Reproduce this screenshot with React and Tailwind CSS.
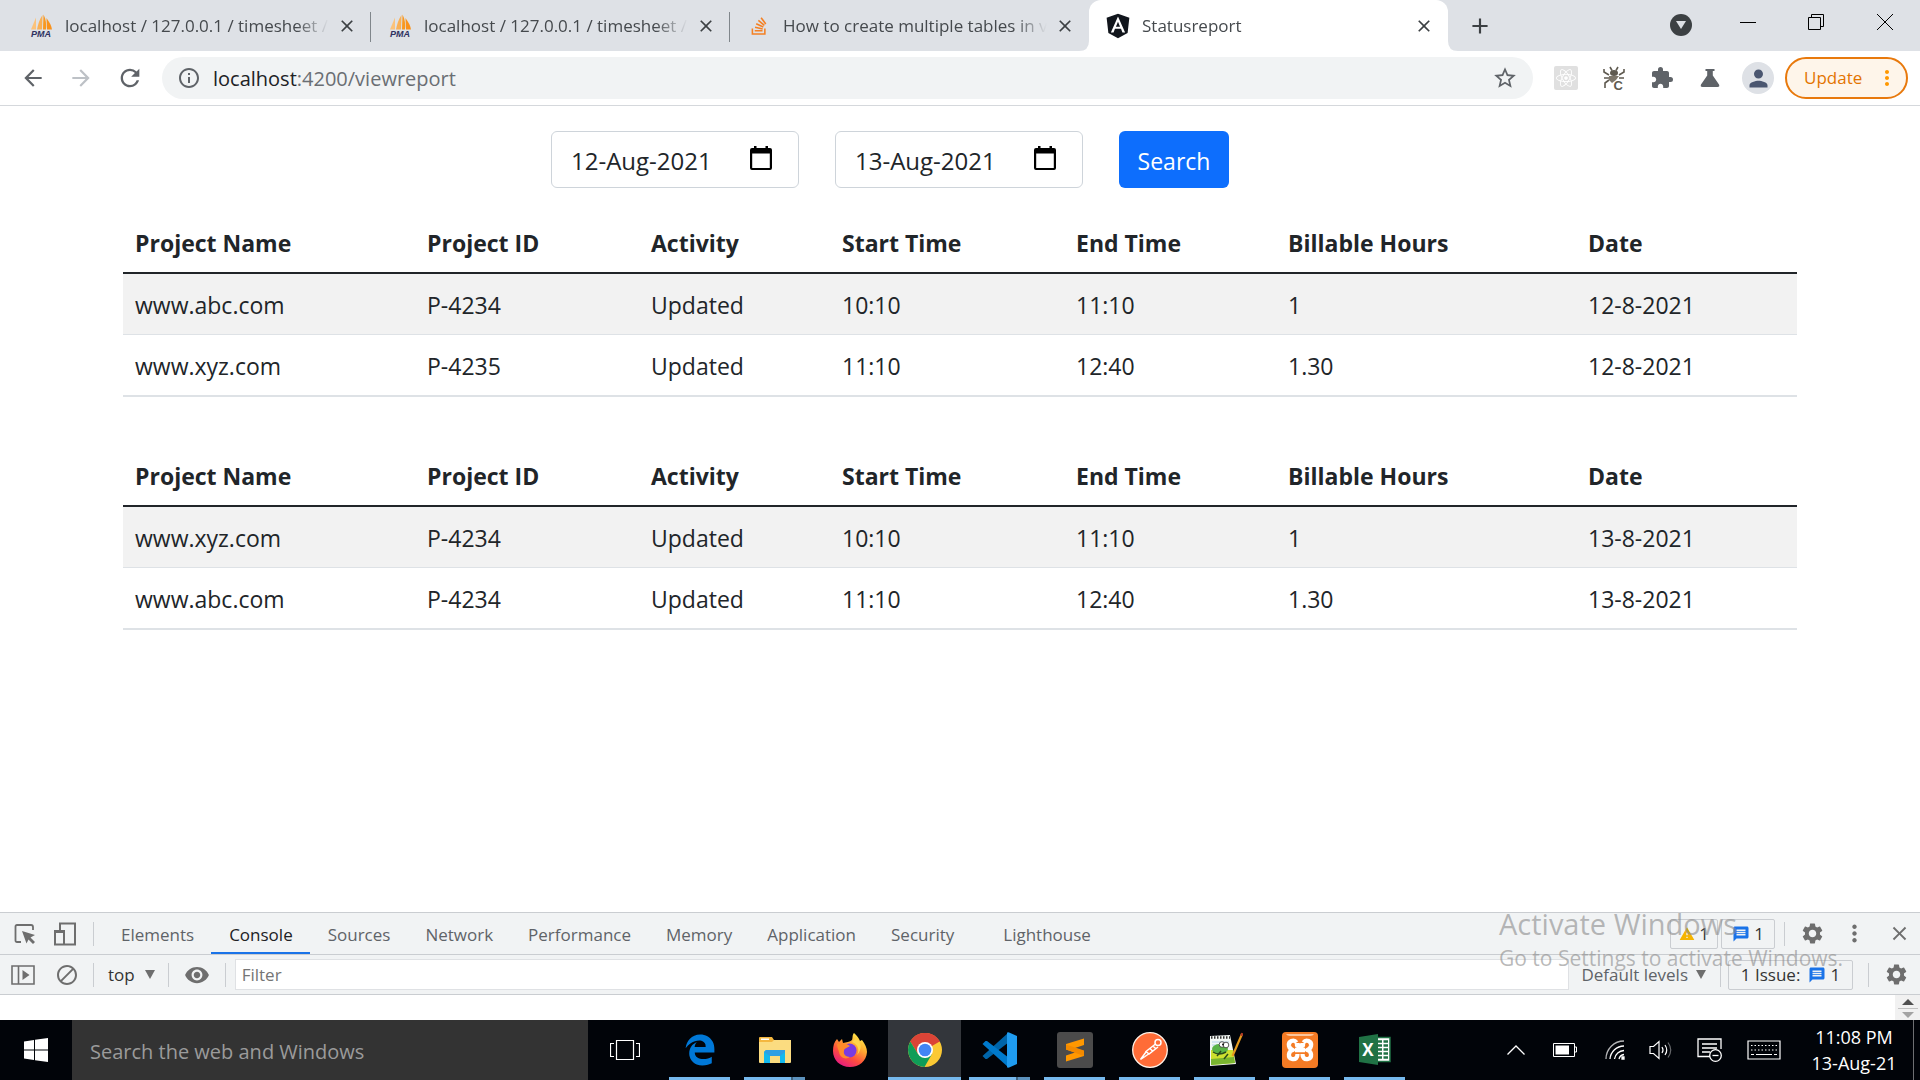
import React, { useState } from 'react';
import {
  MdArrowBack, MdArrowForward, MdRefresh, MdInfoOutline, MdStarBorder,
  MdExtension, MdPerson, MdMoreVert, MdClose, MdSettings, MdBlock,
  MdVisibility, MdWarning, MdMessage, MdAdd
} from 'react-icons/md';
import { FaAngular, FaReact, FaStackOverflow, FaEdgeLegacy } from 'react-icons/fa';

const reports = [
  {
    id: 1,
    rows: [
      ['www.abc.com', 'P-4234', 'Updated', '10:10', '11:10', '1', '12-8-2021'],
      ['www.xyz.com', 'P-4235', 'Updated', '11:10', '12:40', '1.30', '12-8-2021'],
    ],
  },
  {
    id: 2,
    rows: [
      ['www.xyz.com', 'P-4234', 'Updated', '10:10', '11:10', '1', '13-8-2021'],
      ['www.abc.com', 'P-4234', 'Updated', '11:10', '12:40', '1.30', '13-8-2021'],
    ],
  },
];

const columns = [
  { label: 'Project Name', width: 'w-[292px]' },
  { label: 'Project ID', width: 'w-[224px]' },
  { label: 'Activity', width: 'w-[191px]' },
  { label: 'Start Time', width: 'w-[234px]' },
  { label: 'End Time', width: 'w-[212px]' },
  { label: 'Billable Hours', width: 'w-[300px]' },
  { label: 'Date', width: 'w-[221px]' },
];

/* ---------- Icons ---------- */

const PmaIcon = () => (
  <svg viewBox="0 0 24 24" className="w-6 h-6">
    <path d="M7 3.5 L2 15.5 H7 Z" fill="#fbc27a" />
    <path d="M13.5 1 C10 6 9 11 8 15.5 H13 Z" fill="#f9b056" />
    <path d="M14.5 0.5 C17 5 17.5 11 17 15.5 H14 Z" fill="#f89820" />
    <path d="M17.500 4 C21 9 22.500 12 23 15.500 H18 Z" fill="#f9921c" />
    <text x="12" y="23" textAnchor="middle" fontSize="9" fontWeight="bold" fontStyle="italic" fontFamily="Liberation Sans, sans-serif" fill="#2f3160">PMA</text>
  </svg>
);

const BugIcon = () => (
  <svg viewBox="0 0 24 24" className="w-6 h-6" fill="none" stroke="#5f5a50" strokeWidth="1.6">
    <path d="M8 1 L10 4.5 M16 1 L14 4.5 M7 9 L2 6 V3 M17 9 L22 6 V3 M7 12 H2 M17 12 H22 M7 14 L3 17 V22" />
    <ellipse cx="12" cy="7" rx="4" ry="3" fill="#5f5a50" stroke="none" />
    <path d="M7 10 H17 L14 14 L10 17 L7 14 Z" fill="#7d766a" stroke="none" />
    <text x="11.500" y="24" fontSize="13" fontWeight="bold" fontFamily="Liberation Sans, sans-serif" fill="#5f5a50" stroke="none">C</text>
  </svg>
);

const FlaskIcon = () => (
  <svg viewBox="0 0 24 24" className="w-6 h-6" fill="#5f6368">
    <path d="M7.5 3 H16.5 V5 H14.8 V9.5 L21 18.5 Q22 21 19.5 21 H4.5 Q2 21 3 18.5 L9.2 9.5 V5 H7.5 Z" />
  </svg>
);

const InspectIcon = () => (
  <svg viewBox="0 0 24 24" className="w-6 h-6">
    <path d="M8 20 H4 Q2.5 20 2.5 18.5 V4.500 Q2.500 3 4 3 H18 Q20 3 20 5 V8" fill="none" stroke="#6e6e6e" strokeWidth="1.8" />
    <path d="M9 9 L22 13 L17.500 15.500 L22 20 L20 22 L15.500 17.500 L13.500 21.500 Z" fill="#6e6e6e" />
  </svg>
);

const DeviceIcon = () => (
  <svg viewBox="0 0 24 24" className="w-6 h-6" fill="none" stroke="#6e6e6e" strokeWidth="2">
    <path d="M7 8 V1.500 H22 V22.500 H12" />
    <rect x="2" y="9" width="9" height="13.500" />
    <path d="M2 9.500 H11" strokeWidth="3" />
  </svg>
);

const SidebarIcon = () => (
  <svg viewBox="0 0 24 20" className="w-6 h-5">
    <path d="M1 1 H23 V19 H1 Z M7.500 1 V19" fill="none" stroke="#6e6e6e" strokeWidth="1.600" />
    <path d="M11.500 5 L18.500 10 L11.500 15 Z" fill="#6e6e6e" />
  </svg>
);

const CalendarIcon = () => (
  <svg viewBox="0 0 24 26" className="w-6 h-[26px]">
    <path d="M5 1 H7.500 V3 H16.500 V1 H19 V3 H21 Q23 3 23 5 V23 Q23 25 21 25 H3 Q1 25 1 23 V5 Q1 3 3 3 H5 Z M3.200 8.500 V23 H20.800 V8.500 Z" fill="#000" fillRule="evenodd" />
  </svg>
);

const ExplorerIcon = () => (
  <svg viewBox="0 0 36 36" className="w-9 h-9">
    <path d="M2 6 Q2 5 3 5 H15 L17 8 H33 V30 H2 Z" fill="#f4b73f" />
    <path d="M4 6.500 H12 V8 H4 Z" fill="#fff" />
    <path d="M2 10 H15 L17 8 H34 V30 Q34 31 33 31 H3 Q2 31 2 30 Z" fill="#fbdc80" />
    <path d="M9 18 H28 V31 H23 V24 H13 V31 H7 V20 Z" fill="#14b9ee" />
    <path d="M9 18 H28 V20 L23 24 H13 L7 20 Z" fill="#2f9fe4" />
  </svg>
);

const FirefoxIcon = () => (
  <svg viewBox="0 0 36 36" className="w-9 h-9">
    <defs>
      <linearGradient id="ffBody" x1="0.800" y1="0" x2="0.200" y2="1">
        <stop offset="0" stopColor="#fff44f" />
        <stop offset="0.350" stopColor="#ffa930" />
        <stop offset="0.650" stopColor="#ff4f3c" />
        <stop offset="1" stopColor="#e3148b" />
      </linearGradient>
    </defs>
    <path d="M22 1 C25 4 27 6 28 9 L30 8 C33 12 35 16 35 20 C34.500 29 27 35 18 35 C8 35 1 28 1 19 C1 14 2 10 5 7 L7 10 L10 7 L11 11 C14 10 18 10 20 8 C21 6 20 3 22 1 Z" fill="url(#ffBody)" />
    <circle cx="17.500" cy="18.500" r="7" fill="#7a3be0" />
    <path d="M5 12 C9 10 14 11 18 14 C15 16 12 16 12 19 C11 22 14 25 18 25 C14 28 8 26 7 20 C6 17 5 14 5 12 Z" fill="#ff8a2a" />
    <path d="M20 10 C26 12 28 18 25 23 C30 18 30 10 24 6 Z" fill="#ffd64a" />
  </svg>
);

const ChromeIcon = () => (
  <svg viewBox="0 0 36 36" className="w-9 h-9">
    <circle cx="18" cy="18" r="17" fill="#fbc934" />
    <path d="M18 18 L3.300 9.500 A17 17 0 0 1 32.700 9.500 Z" fill="#db4437" />
    <path d="M18 10 H33 L32.700 9.500 A17 17 0 0 0 3.300 9.500 L11 22 Z" fill="#db4437" />
    <path d="M3.300 9.500 A17 17 0 0 0 17.500 35 L25 22 L18 26 L11 22 Z" fill="#0f9d58" />
    <circle cx="18" cy="18" r="8" fill="#fff" />
    <circle cx="18" cy="18" r="6.300" fill="#4285f4" />
  </svg>
);

const VsCodeIcon = () => (
  <svg viewBox="0 0 36 36" className="w-9 h-9">
    <path d="M26 1 L0.500 24 L3.500 27 L5 27 L27 10 Z" fill="#0065a9" />
    <path d="M26 35 L0.500 12 L3.500 9 L5 9 L27 26 Z" fill="#007acc" />
    <path d="M26 0 L35 4 V32 L26 36 Q27 35.500 27 34 V2 Q27 0.500 26 0 Z" fill="#1f9cf0" />
    <path d="M25 0.500 L27 0.500 V35.500 L25 35.500 Z" fill="#1f9cf0" />
  </svg>
);

const SublimeIcon = () => (
  <svg viewBox="0 0 36 36" className="w-9 h-9">
    <rect width="36" height="36" rx="3" fill="#4b4b4b" />
    <path d="M9 12 L27 6.500 V13 L18 16 L27 19 V24 L9 29.500 V23.500 L18 20.500 L9 17.500 Z" fill="#ff9800" />
    <path d="M9 17.500 V12.500 L27 18.500 V24 Z" fill="#f38a00" />
  </svg>
);

const PostmanIcon = () => (
  <svg viewBox="0 0 36 36" className="w-9 h-9">
    <circle cx="18" cy="18" r="17.300" fill="#ff6c37" stroke="#fff1e6" strokeWidth="1.300" />
    <circle cx="26" cy="10.500" r="3" fill="none" stroke="#fff" strokeWidth="1.500" />
    <path d="M23.500 12 L14 19.500 L17 22 L26 15 M21 14 L24 17 M18 16.500 L21 19.500 M14 20 L8.500 27.500 L13 24.500 L16.500 22" fill="none" stroke="#fff" strokeWidth="1.500" />
  </svg>
);

const NotepadIcon = () => (
  <svg viewBox="0 0 36 36" className="w-9 h-9">
    <path d="M3 4 L23 3 L29 32 L3 34 Z" fill="#f2f7f4" />
    <path d="M4 5.500 H23" stroke="#333" strokeWidth="2.500" strokeDasharray="1.500 1.500" />
    <path d="M5 10 H22 M5 13 H22" stroke="#b6d3ea" strokeWidth="1" />
    <path d="M4 18 L26 18 L28 31 L4 33 Z" fill="#cde02f" />
    <path d="M4 27 L27 25 L28 31 L4 33 Z" fill="#79b530" />
    <ellipse cx="13" cy="17" rx="8" ry="5" fill="#5ab347" />
    <path d="M6 20 Q12 24 19 20 M10 24 L14 19 M17 27 L21 22" fill="none" stroke="#2b4a1c" strokeWidth="1.500" />
    <circle cx="15" cy="12.500" r="2.800" fill="#fff" stroke="#333" strokeWidth="0.800" />
    <circle cx="19" cy="13" r="2.800" fill="#fff" stroke="#333" strokeWidth="0.800" />
    <circle cx="16" cy="12.500" r="1" fill="#111" />
    <path d="M35 2 L25.500 24" stroke="#e69a1d" strokeWidth="2.200" />
    <path d="M35.300 1 L34.300 4" stroke="#b13c26" strokeWidth="2.200" />
  </svg>
);

const XamppIcon = () => (
  <svg viewBox="0 0 36 36" className="w-9 h-9">
    <rect width="36" height="36" rx="4" fill="#f47b24" />
    <path d="M4 2 H32 Q31 4 28 4 H8 Q5 4 4 2 Z" fill="#fbc59b" />
    <path d="M14.500 10.500 C12 7 6 9 7 14 C7.500 16 9 17.500 11 18 C6 19 5.500 26 10 27 C14 28 15.500 25 15.500 22 M21.500 10.500 C24 7 30 9 29 14 C28.500 16 27 17.500 25 18 C30 19 30.500 26 26 27 C22 28 20.500 25 20.500 22 M13 18 H23 M15 11 V13.500 H21 V11" fill="none" stroke="#fff" strokeWidth="4.300" strokeLinejoin="round" />
  </svg>
);

const ExcelIcon = () => (
  <svg viewBox="0 0 36 36" className="w-9 h-9">
    <rect x="18" y="5.500" width="15" height="24" fill="#fff" stroke="#207245" strokeWidth="1.500" />
    <path d="M20 9.500 H31 M20 13.500 H31 M20 17.500 H31 M20 21.500 H31 M20 25.500 H31" stroke="#207245" strokeWidth="2.500" strokeDasharray="5 1.500" />
    <path d="M2 5 L21 2 V33 L2 30 Z" fill="#207245" />
    <text x="11" y="24" textAnchor="middle" fontSize="17" fontWeight="bold" fontFamily="Open Sans, sans-serif" fill="#fff">X</text>
  </svg>
);

/* ---------- Browser ---------- */

const tabs = [
  { id: 1, title: 'localhost / 127.0.0.1 / timesheet /', icon: <PmaIcon />, divider: true },
  { id: 2, title: 'localhost / 127.0.0.1 / timesheet /', icon: <PmaIcon />, divider: true },
  { id: 3, title: 'How to create multiple tables in v', icon: <FaStackOverflow className="w-5 h-5 text-[#f48024]" /> },
  { id: 4, title: 'Statusreport', icon: <span className="flex w-6 h-6 items-center justify-center"><FaAngular className="w-7 h-7 shrink-0 text-[#11151c]" /></span>, active: true },
];

const Tab = ({ tab }) => (
  <div className={`relative flex h-full w-[359px] shrink-0 items-center pt-px pl-[17px] pr-3.5 ${
    tab.active ? 'bg-white rounded-t-xl' : ''
  }`}>
    <span className="flex w-6 shrink-0 justify-center">{tab.icon}</span>
    <span className="ml-3 flex-1 overflow-hidden whitespace-nowrap text-[17px] leading-6 text-[#45494d] [mask-image:linear-gradient(to_right,#000_85%,transparent_97%)]">
      {tab.title}
    </span>
    <button aria-label="Close tab" className="flex w-5 justify-center text-[#3c4043]">
      <MdClose className="w-5 h-5" />
    </button>
    {tab.divider && <span className="absolute right-0 top-3 h-[30px] w-px bg-[#80868b]" />}
    {tab.active && (
      <>
        <svg viewBox="0 0 10 10" className="absolute bottom-0 -left-2.5 w-2.5 h-2.5"><path d="M10 0 V10 H0 Q10 10 10 0" fill="#fff" /></svg>
        <svg viewBox="0 0 10 10" className="absolute bottom-0 -right-2.5 w-2.5 h-2.5"><path d="M0 0 V10 H10 Q0 10 0 0" fill="#fff" /></svg>
      </>
    )}
  </div>
);

const TabStrip = () => (
  <div className="flex h-[51px] shrink-0 bg-[#dee1e6] pl-3">
    {tabs.map((tab) => <Tab key={tab.id} tab={tab} />)}
    <button aria-label="New tab" className="ml-[19px] text-[#3c4043]">
      <MdAdd className="w-[26px] h-[26px]" />
    </button>
    <div className="ml-auto flex items-start">
      <span className="mt-3.5 mr-[22px] flex w-[22px] h-[22px] items-center justify-center rounded-full bg-[#3c4043]">
        <svg viewBox="0 0 10 8" className="w-2.5 h-2"><path d="M0 0 H10 L5 8 Z" fill="#dee1e6" /></svg>
      </span>
      <button aria-label="Minimize" className="flex h-[43px] w-[68px] items-center justify-center">
        <svg viewBox="0 0 16 16" className="w-4 h-4"><path d="M0 8.500 H16" stroke="#000" /></svg>
      </button>
      <button aria-label="Restore" className="flex h-[43px] w-[68px] items-center justify-center">
        <svg viewBox="0 0 16 16" className="w-4 h-4" fill="none" stroke="#000"><path d="M0.500 3.500 H12.500 V15.500 H0.500 Z M3.500 3.500 V0.500 H15.500 V12.500 H12.500" /></svg>
      </button>
      <button aria-label="Close" className="flex h-[43px] w-[70px] items-center justify-center">
        <svg viewBox="0 0 16 16" className="w-4 h-4"><path d="M0 0 L16 16 M16 0 L0 16" stroke="#000" /></svg>
      </button>
    </div>
  </div>
);

const Toolbar = () => (
  <div className="flex h-[55px] shrink-0 items-center border-b border-[#d5d8dc] bg-white pl-5 pr-3">
    <button aria-label="Back" className="w-12 text-[#5f6368]"><MdArrowBack className="w-[26px] h-[26px]" /></button>
    <button aria-label="Forward" className="w-12 text-[#bdc1c6]"><MdArrowForward className="w-[26px] h-[26px]" /></button>
    <button aria-label="Reload" className="w-[46px] text-[#5f6368]"><MdRefresh className="w-[28px] h-[28px]" /></button>
    <div className="flex h-[42px] flex-1 items-center rounded-full bg-[#f1f3f4] px-[15px]">
      <MdInfoOutline className="w-6 h-6 text-[#5f6368]" />
      <div className="ml-3 pt-px text-[20px] leading-7 text-[#6a6e73]">
        <span className="text-[#202124]">localhost</span>:4200/viewreport
      </div>
      <button aria-label="Bookmark" className="ml-auto text-[#5f6368]"><MdStarBorder className="w-[26px] h-[26px]" /></button>
    </div>
    <div className="ml-[21px] flex items-center gap-6">
      <span className="flex w-6 h-6 items-center justify-center rounded-xs bg-[#e0e0e0]"><FaReact className="w-5 h-5 text-white" /></span>
      <BugIcon />
      <MdExtension className="w-6 h-6 text-[#5f6368]" />
      <FlaskIcon />
    </div>
    <span className="ml-5 flex w-8 h-8 items-center justify-center rounded-full bg-[#dee1e6]">
      <MdPerson className="w-[27px] h-[27px] text-[#4a5670]" />
    </span>
    <button className="ml-[11px] flex h-[42px] w-[123px] items-center justify-between rounded-full border-2 border-[#e8790c] bg-[#fef5ea] pl-[17px] pr-[7px] text-[17px] text-[#e37400]">
      Update
      <MdMoreVert className="w-6 h-6 text-[#ff9800]" />
    </button>
  </div>
);

/* ---------- Page ---------- */

const DateField = ({ label, value, onChange }) => (
  <div className="relative">
    <input
      type="text"
      aria-label={label}
      value={value}
      onChange={(e) => onChange(e.target.value)}
      className="block h-[57px] w-[248px] rounded-md border border-[#ced4da] bg-white pl-[19px] pr-14 pt-0.5 text-[24px] text-[#212529]"
    />
    <button aria-label="Open calendar" className="absolute right-[26px] top-3.5"><CalendarIcon /></button>
  </div>
);

const ReportTable = ({ rows }) => (
  <table className="mb-12 w-full table-fixed text-left text-[23px] leading-9 text-[#212529]">
    <thead>
      <tr className="border-b-2 border-[#212529]">
        {columns.map((col) => (
          <th key={col.label} className={`${col.width} px-3 pt-[13px] pb-[11px] font-bold`}>{col.label}</th>
        ))}
      </tr>
    </thead>
    <tbody>
      {rows.map((row) => (
        <tr key={row[0]} className="border-b border-[#dee2e6] last:border-b-2 odd:bg-[#f2f2f2]">
          {row.map((cell, i) => (
            <td key={columns[i].label} className="px-3 pt-[13px] pb-[11px]">{cell}</td>
          ))}
        </tr>
      ))}
    </tbody>
  </table>
);

const ViewReport = () => {
  const [from, setFrom] = useState('12-Aug-2021');
  const [to, setTo] = useState('13-Aug-2021');

  return (
    <main className="min-h-0 flex-1 overflow-hidden bg-white px-[123px] pt-[25px]">
      <form className="mb-6 ml-[428px] flex gap-9" onSubmit={(e) => e.preventDefault()}>
        <DateField label="From date" value={from} onChange={setFrom} />
        <DateField label="To date" value={to} onChange={setTo} />
        <button type="submit" className="w-[110px] rounded-md bg-[#0d6efd] pt-1 text-[23px] text-white">Search</button>
      </form>
      {reports.map((report) => <ReportTable key={report.id} rows={report.rows} />)}
    </main>
  );
};

/* ---------- DevTools ---------- */

const panels = ['Elements', 'Console', 'Sources', 'Network', 'Performance', 'Memory', 'Application', 'Security', 'Lighthouse'];

const Divider = () => <span className="h-6 w-px shrink-0 bg-[#cacdd1]" />;

const DevTools = () => (
  <section className="shrink-0 text-[17px] leading-6 text-[#5f6368]">
    <div className="flex h-[43px] items-center border-y border-[#cacdd1] bg-[#f1f3f4] pl-[13px] pr-[9px]">
      <button aria-label="Inspect element"><InspectIcon /></button>
      <button aria-label="Toggle device toolbar" className="ml-4 mr-4"><DeviceIcon /></button>
      <Divider />
      <nav className="ml-[9px] flex self-stretch">
        {panels.map((panel) => (
          <button
            key={panel}
            className={`pl-[18px] pr-[17px] pt-1 last:ml-3.5 ${
              panel === 'Console' ? 'border-b-2 border-[#1a73e8] text-[#202124]' : 'border-b-2 border-transparent'
            }`}
          >
            {panel}
          </button>
        ))}
      </nav>
      <div className="ml-auto flex items-center text-[#333]">
        <button className="flex h-[30px] w-12 items-center justify-center gap-1 rounded-xs border border-[#cacdd1]">
          <MdWarning className="w-4 h-4 text-[#f5b400]" />1
        </button>
        <button className="ml-[3px] mr-[9px] flex h-[30px] w-[54px] items-center justify-center gap-1 rounded-xs border border-[#cacdd1]">
          <MdMessage className="w-[18px] h-[18px] text-[#1a73e8]" />1
        </button>
        <Divider />
        <button aria-label="Settings" className="ml-[15px] text-[#6e6e6e]"><MdSettings className="w-[25px] h-[25px]" /></button>
        <button aria-label="More options" className="ml-4 text-[#6e6e6e]"><MdMoreVert className="w-[27px] h-[27px]" /></button>
        <button aria-label="Close developer tools" className="ml-5 text-[#6e6e6e]"><MdClose className="w-[23px] h-[23px]" /></button>
      </div>
    </div>
    <div className="flex h-10 items-center border-b border-[#cacdd1] bg-[#f1f3f4] pl-[11px] pr-[11px]">
      <button aria-label="Show console sidebar"><SidebarIcon /></button>
      <button aria-label="Clear console" className="ml-5 mr-3.5"><MdBlock className="w-6 h-6 text-[#6e6e6e]" /></button>
      <Divider />
      <button className="ml-3.5 mr-[13px] flex items-center gap-2.5 text-[#333]">
        top
        <svg viewBox="0 0 10 9" className="w-2.5 h-[9px]"><path d="M0 0 H10 L5 9 Z" fill="#6e6e6e" /></svg>
      </button>
      <Divider />
      <button aria-label="Live expression" className="mx-[15px]"><MdVisibility className="w-[26px] h-[26px] text-[#6e6e6e]" /></button>
      <Divider />
      <input
        aria-label="Filter"
        placeholder="Filter"
        className="ml-[9px] h-[31px] min-w-0 flex-1 border border-[#dfe1e4] bg-white px-1.5 placeholder:text-[#757575]"
      />
      <button className="ml-3 mr-3.5 flex items-center gap-2">
        Default levels
        <svg viewBox="0 0 10 9" className="w-2.5 h-[9px]"><path d="M0 0 H10 L5 9 Z" fill="#6e6e6e" /></svg>
      </button>
      <Divider />
      <button className="ml-[7px] mr-[15px] flex h-[30px] w-[125px] items-center justify-center gap-1 rounded-xs border border-[#cacdd1] text-[#333]">
        1 Issue: <MdMessage className="ml-1 w-[18px] h-[18px] text-[#1a73e8]" />1
      </button>
      <Divider />
      <button aria-label="Console settings" className="ml-[15px] text-[#6e6e6e]"><MdSettings className="w-[25px] h-[25px]" /></button>
    </div>
    <div className="flex h-[25px] justify-end bg-white">
      <div className="flex w-[25px] flex-col items-center justify-between bg-[#f1f1f1] pt-1 pb-0.5">
        <svg viewBox="0 0 12 6" className="w-3 h-1.5"><path d="M0 6 L6 0 L12 6 Z" fill="#505050" /></svg>
        <span className="h-px w-5 bg-[#c1c1c1]" />
        <svg viewBox="0 0 12 6" className="w-3 h-1.5"><path d="M0 0 L6 6 L12 0 Z" fill="#a3a3a3" /></svg>
      </div>
    </div>
  </section>
);

/* ---------- Taskbar ---------- */

const apps = [
  { name: 'Edge', icon: <FaEdgeLegacy className="w-8 h-8 text-[#0078d7]" />, open: true },
  { name: 'File Explorer', icon: <ExplorerIcon />, open: true, stacked: true },
  { name: 'Firefox', icon: <FirefoxIcon /> },
  { name: 'Chrome', icon: <ChromeIcon />, open: true, focused: true },
  { name: 'Visual Studio Code', icon: <VsCodeIcon />, open: true, stacked: true },
  { name: 'Sublime Text', icon: <SublimeIcon />, open: true },
  { name: 'Postman', icon: <PostmanIcon />, open: true },
  { name: 'Notepad++', icon: <NotepadIcon />, open: true },
  { name: 'XAMPP', icon: <XamppIcon />, open: true },
  { name: 'Excel', icon: <ExcelIcon />, open: true },
];

const TaskbarApp = ({ app }) => (
  <button aria-label={app.name} className={`flex h-full w-[73px] flex-col items-center ${app.focused ? 'bg-[#33363b]' : ''}`}>
    <span className="flex flex-1 items-center pt-[3px]">{app.icon}</span>
    <span className={`flex h-[3px] ${app.focused ? 'w-full' : 'w-[61px]'} ${app.open ? 'bg-[#76b9ed]' : ''}`}>
      {app.stacked && <span className="ml-auto w-3.5 border-l-2 border-[#40647f] bg-[#5c92bd]" />}
    </span>
  </button>
);

const Taskbar = () => (
  <footer className="flex h-[60px] shrink-0 bg-[#010409] text-white">
    <button aria-label="Start" className="flex w-[72px] items-center justify-center">
      <svg viewBox="0 0 24 24" className="w-6 h-6" fill="#fff">
        <path d="M0 3.500 L10 2 V11.500 H0 Z M11 1.800 L24 0 V11.500 H11 Z M0 12.500 H10 V22 L0 20.500 Z M11 12.500 H24 V24 L11 22.200 Z" />
      </svg>
    </button>
    <input
      aria-label="Search the web and Windows"
      placeholder="Search the web and Windows"
      className="w-[516px] bg-[#333] px-[18px] pt-1 text-[20px] placeholder:text-[#9b9b9b]"
    />
    <button aria-label="Task view" className="flex w-[73px] items-center justify-center">
      <svg viewBox="0 0 30 20" className="w-[30px] h-5" fill="none" stroke="#fff" strokeWidth="1.200">
        <path d="M6.500 0.500 H23.500 V19.500 H6.500 Z M4 3.500 H0.500 V16.500 H4 M26 3.500 H29.500 V16.500 H26" />
      </svg>
    </button>
    <div className="ml-0.5 flex gap-0.5">
      {apps.map((app) => <TaskbarApp key={app.name} app={app} />)}
    </div>
    <div className="ml-auto flex items-center">
      <svg viewBox="0 0 18 10" className="w-[18px] h-2.5" fill="none" stroke="#fff" strokeWidth="1.300"><path d="M0.500 9.500 L9 1 L17.500 9.500" /></svg>
      <svg viewBox="0 0 24 14" className="ml-7 w-6 h-3.5"><path d="M0.500 0.500 H21.500 V13.500 H0.500 Z M22 4 H23.500 V9 H22" fill="none" stroke="#fff" /><path d="M2.500 2.500 H16 V11.500 H2.500 Z" fill="#fff" /></svg>
      <svg viewBox="0 0 20 20" className="ml-7 w-5 h-5" fill="none" stroke="#fff" strokeWidth="1.300">
        <path d="M1 19 A18 18 0 0 1 19 1" opacity="0.700" />
        <path d="M5 19 A14 14 0 0 1 19 6 M9.500 19 A10 10 0 0 1 19 10.500 M14 19 A6 6 0 0 1 19 14.500" />
        <path d="M17 17 H19 V19 H17 Z" fill="#fff" />
      </svg>
      <svg viewBox="0 0 24 20" className="ml-6 w-6 h-5" fill="none" stroke="#fff" strokeWidth="1.200">
        <path d="M1 6.500 H4.500 L10 1.500 V18.500 L4.500 13.500 H1 Z M13 7 Q15 10 13 13" />
        <path d="M16 5 Q19.500 10 16 15" />
        <path d="M19 2.500 Q24.500 10 19 17.500" opacity="0.400" />
      </svg>
      <svg viewBox="0 0 26 24" className="ml-6 w-[26px] h-6" fill="none" stroke="#fff" strokeWidth="1.300">
        <path d="M13 18.500 H1 V1 H24 V11 M5 6 H20 M5 10 H20 M5 14 H13" />
        <circle cx="18.500" cy="17.500" r="5.800" />
        <path d="M15.500 17.500 H21.500" />
      </svg>
      <svg viewBox="0 0 34 20" className="ml-6 w-[34px] h-5" fill="none" stroke="#fff" strokeWidth="1.200">
        <path d="M1 1 H33 V19 H1 Z M4 14.500 H7 M9 14.500 H25 M27 14.500 H30" />
        <path d="M4 5.500 H30 M4 10 H30" strokeDasharray="1.500 2" />
      </svg>
      <div className="ml-6 mr-2.5 w-[98px] text-center text-[18px] leading-[26px]">
        <div>11:08 PM</div>
        <div>13-Aug-21</div>
      </div>
      <span className="mr-1.5 h-[60px] w-px bg-[#6d6f72]" />
    </div>
  </footer>
);

const App = () => (
  <div className="relative flex h-screen flex-col overflow-hidden bg-white font-['Open_Sans',sans-serif]">
    <TabStrip />
    <Toolbar />
    <ViewReport />
    <DevTools />
    <Taskbar />
    <div className="pointer-events-none absolute bottom-[106px] right-[79px] w-[342px] whitespace-nowrap text-[#8a8a8a]/60">
      <div className="text-[29px] leading-9">Activate Windows</div>
      <div className="text-[21px] leading-8">Go to Settings to activate Windows.</div>
    </div>
  </div>
);

export default App;
